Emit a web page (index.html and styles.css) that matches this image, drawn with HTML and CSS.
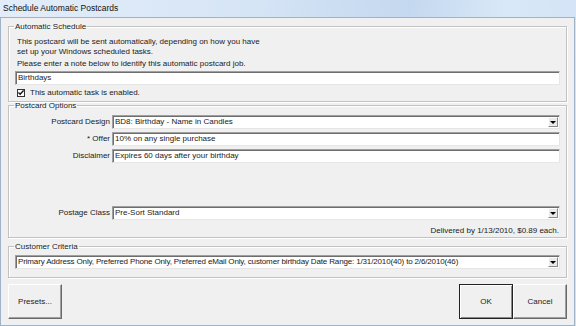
FILE: index.html
```html
<!DOCTYPE html>
<html lang="en">
<head>
    <meta charset="UTF-8">
    <title>Schedule Automatic Postcards</title>
    <link rel="stylesheet" href="styles.css">
</head>
<body>
    <div class="window">
        <div class="titlebar">Schedule Automatic Postcards</div>
        <div class="client">
            <fieldset class="group group-schedule">
                <legend>Automatic Schedule</legend>
                <p class="note">This postcard will be sent automatically, depending on how you have<br>set up your Windows scheduled tasks.</p>
                <p class="prompt">Please enter a note below to identify this automatic postcard job.</p>
                <div class="textbox">Birthdays</div>
                <label class="check-row">
                    <span class="checkbox">
                        <svg width="7" height="7" viewBox="0 0 7 7"><path d="M0.5 3.5 L2.5 5.5 L6.5 1" fill="none" stroke="#111" stroke-width="1.6"/></svg>
                    </span>
                    This automatic task is enabled.
                </label>
            </fieldset>

            <fieldset class="group group-options">
                <legend>Postcard Options</legend>
                <div class="form-row">
                    <span class="label">Postcard Design</span>
                    <div class="combo">BD8: Birthday - Name in Candles<span class="drop"></span></div>
                </div>
                <div class="form-row">
                    <span class="label">* Offer</span>
                    <div class="textbox">10% on any single purchase</div>
                </div>
                <div class="form-row">
                    <span class="label">Disclaimer</span>
                    <div class="textbox">Expires 60 days after your birthday</div>
                </div>
                <div class="form-row postage">
                    <span class="label">Postage Class</span>
                    <div class="combo">Pre-Sort Standard<span class="drop"></span></div>
                </div>
                <p class="delivered">Delivered by 1/13/2010, $0.89 each.</p>
            </fieldset>

            <fieldset class="group group-criteria">
                <legend>Customer Criteria</legend>
                <div class="combo criteria">Primary Address Only, Preferred Phone Only, Preferred eMail Only, customer birthday Date Range: 1/31/2010(40) to 2/6/2010(46)<span class="drop"></span></div>
            </fieldset>

            <div class="buttons">
                <button class="btn">Presets...</button>
                <div class="btn-pair">
                    <button class="btn btn-default">OK</button>
                    <button class="btn">Cancel</button>
                </div>
            </div>
        </div>
    </div>
</body>
</html>
```

FILE: styles.css
```css
body {
    margin: 0;
    font-family: "Liberation Sans", Arial, sans-serif;
    font-size: 8px;
    color: #1a1a1a;
}
.window {
    width: 576px;
    height: 326px;
    display: flex;
    flex-direction: column;
    background: linear-gradient(100deg, #e3edf9 0%, #d6e5f6 40%, #c4d8ef 65%, #d9e8f8 80%, #cfe1f5 100%);
    overflow: hidden;
}
.titlebar {
    height: 17px;
    padding-left: 3px;
    display: flex;
    align-items: center;
    font-size: 8.5px;
    color: #111;
}
.client {
    height: 304px;
    margin-right: 1px;
    background: #f0f0f0;
    border: 1px solid #9fb2c8;
    padding: 4px 7px 0 7px;
    display: flex;
    flex-direction: column;
}
.group {
    margin: 0;
    padding: 5px 6px 2px 6px;
    border: 1px solid #c2c2c2;
    box-shadow: inset 1px 1px 0 #fff, 1px 1px 0 #fff;
    min-width: 0;
}
.group legend {
    padding: 0 1px;
    margin-left: -1px;
    line-height: 10px;
    color: #222;
}
.note, .prompt {
    margin: 0;
    line-height: 10px;
    padding-left: 2px;
}
.prompt {
    margin-top: 2px;
}
.textbox, .combo {
    position: relative;
    height: 14px;
    box-sizing: border-box;
    background: #fff;
    border-top: 1px solid #a0a0a0;
    border-left: 1px solid #a0a0a0;
    border-right: 1px solid #e6e6e6;
    border-bottom: 1px solid #e6e6e6;
    box-shadow: inset 1px 1px 0 #6e6e6e;
    padding: 0 2px;
    line-height: 12px;
    white-space: nowrap;
    overflow: hidden;
}
.combo.criteria {
    letter-spacing: -0.15px;
}
.group-schedule .textbox {
    margin-top: 2px;
}
.check-row {
    margin-top: 2px;
    height: 12px;
    display: flex;
    align-items: center;
    gap: 5px;
    padding-left: 2px;
}
.checkbox {
    width: 8px;
    height: 8px;
    box-sizing: border-box;
    border: 1px solid #333;
    background: #fff;
    display: flex;
    align-items: center;
    justify-content: center;
}
.group-options {
    margin-top: -1px;
    padding-top: 4px;
    padding-bottom: 0;
}
.form-row {
    display: grid;
    grid-template-columns: 95px 1fr;
    column-gap: 2px;
    align-items: center;
    margin-bottom: 3px;
}
.form-row .label {
    text-align: right;
}
.form-row.postage {
    margin-top: 43px;
    margin-bottom: 0;
}
.drop {
    position: absolute;
    right: 1px;
    top: 1px;
    width: 10px;
    height: 10px;
    box-sizing: border-box;
    background: #eaeaea;
    border: 1px solid;
    border-color: #fff #8a8a8a #8a8a8a #fff;
}
.drop::after {
    content: "";
    position: absolute;
    left: 1px;
    top: 3px;
    border-left: 3px solid transparent;
    border-right: 3px solid transparent;
    border-top: 3px solid #000;
}
.delivered {
    margin: 6px 0 1px 0;
    line-height: 10px;
    text-align: right;
    padding-right: 1px;
}
.group-criteria {
    margin-top: 4px;
    padding-top: 3px;
    padding-bottom: 8px;
}
.buttons {
    margin-top: 6px;
    display: flex;
    justify-content: space-between;
}
.btn-pair {
    display: flex;
}
.btn {
    width: 54px;
    height: 35px;
    margin: 0;
    padding: 0;
    font-family: inherit;
    font-size: 8px;
    color: #1a1a1a;
    background: #f0f0f0;
    border: 1px solid;
    border-color: #fff #6a6a6a #6a6a6a #fff;
    box-shadow: inset -1px -1px 0 #a0a0a0;
}
.btn-default {
    border: 1px solid #222;
    box-shadow: inset 1px 1px 0 #fff, inset -1px -1px 0 #8a8a8a;
}
```
